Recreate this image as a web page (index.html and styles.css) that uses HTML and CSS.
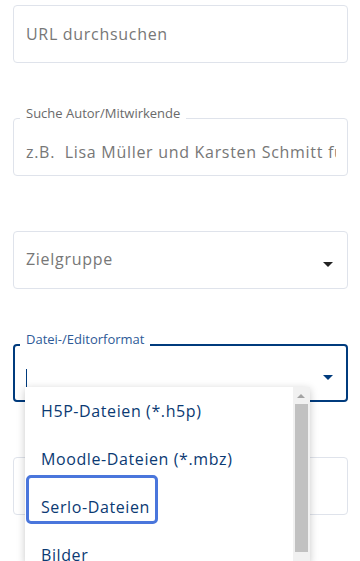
FILE: index.html
```html
<!DOCTYPE html>
<html lang="de">

<head>
    <meta charset="UTF-8">
    <meta name="viewport" content="width=device-width, initial-scale=1.0">
    <title>Suche</title>
    <link rel="stylesheet" href="styles.css">
</head>

<body>

    <form class="search-form">
        <div class="field">
            <input class="field-input" type="text" placeholder="URL durchsuchen">
        </div>

        <div class="field field--labelled">
            <label class="field-label">Suche Autor/Mitwirkende</label>
            <input class="field-input" type="text" placeholder="z.B.&nbsp; Lisa Müller und Karsten Schmitt für">
        </div>

        <div class="field field--select">
            <span class="select-value">Zielgruppe</span>
            <span class="select-arrow"></span>
        </div>

        <div class="field field--select field--labelled field--focused">
            <label class="field-label">Datei-/Editorformat</label>
            <span class="caret"></span>
            <span class="select-arrow"></span>

            <div class="dropdown">
                <ul class="dropdown-list">
                    <li class="dropdown-item">H5P-Dateien (*.h5p)</li>
                    <li class="dropdown-item">Moodle-Dateien (*.mbz)</li>
                    <li class="dropdown-item dropdown-item--focus">Serlo-Dateien</li>
                    <li class="dropdown-item">Bilder</li>
                </ul>
                <div class="scrollbar">
                    <span class="scrollbar-up"></span>
                    <span class="scrollbar-thumb"></span>
                </div>
            </div>
        </div>

        <div class="field"></div>
    </form>

</body>

</html>
```

FILE: styles.css
```css
html,
body {
    margin: 0;
    height: 100%;
    overflow: hidden;
    background: #fff;
}

body {
    font-family: "Open Sans", "Noto Sans", sans-serif;
}

.search-form {
    display: flex;
    flex-direction: column;
    gap: 55px;
    padding: 5px 12px 0 13px;
}

.field {
    position: relative;
    display: flex;
    align-items: center;
    height: 58px;
    box-sizing: border-box;
    padding: 0 11px 0 12px;
    border: 1px solid #dfe3eb;
    border-radius: 4px;
}

.field--labelled {
    padding-top: 9px;
}

.field--focused {
    border: 2px solid #003b7d;
    padding-left: 11px;
}

.field-label {
    position: absolute;
    top: -14px;
    left: 6px;
    padding: 0 6px;
    background: #fff;
    font-size: 13px;
    line-height: 16px;
    color: #6a6a6a;
    white-space: nowrap;
}

.field--focused .field-label {
    top: -15px;
    left: 5px;
    color: #2d5a97;
}

.field-input {
    flex: 1;
    min-width: 0;
    padding: 0;
    border: none;
    outline: none;
    background: transparent;
    font-family: inherit;
    font-size: 16px;
    letter-spacing: 0.7px;
    color: #333;
}

.field-input::placeholder {
    color: #777;
    opacity: 1;
}

.select-value {
    flex: 1;
    font-size: 16px;
    letter-spacing: 0.7px;
    color: #777;
    padding-bottom: 2px;
}

.select-arrow {
    position: absolute;
    right: 14px;
    top: 30px;
    width: 0;
    height: 0;
    border-left: 5px solid transparent;
    border-right: 5px solid transparent;
    border-top: 5px solid #222;
}

.field--focused .select-arrow {
    right: 13px;
    top: 29px;
    border-top-color: #003b7d;
}

.caret {
    width: 1px;
    height: 19px;
    margin-top: 2px;
    background: #003b7d;
}

/* open dropdown of the format select */
.dropdown {
    position: absolute;
    top: 41px;
    left: 10px;
    width: 285px;
    height: 176px;
    display: flex;
    background: #fff;
    box-shadow: 0 2px 8px rgba(0, 0, 0, 0.22);
    overflow: hidden;
    z-index: 2;
}

.dropdown-list {
    flex: 1;
    margin: 0;
    padding: 0;
    list-style: none;
}

.dropdown-item {
    position: relative;
    height: 48px;
    display: flex;
    align-items: center;
    padding-left: 16px;
    font-size: 16px;
    letter-spacing: 0.6px;
    color: #0b3a73;
}

.dropdown-item--focus::before {
    content: "";
    position: absolute;
    top: -8px;
    left: 1px;
    width: 126px;
    height: 43px;
    border: 3px solid #4a76dc;
    border-radius: 5px;
}

.scrollbar {
    position: relative;
    width: 17px;
    background: #f1f1f1;
}

.scrollbar-up {
    position: absolute;
    top: 7px;
    left: 4px;
    width: 0;
    height: 0;
    border-left: 4px solid transparent;
    border-right: 4px solid transparent;
    border-bottom: 4px solid #a3a3a3;
}

.scrollbar-thumb {
    position: absolute;
    top: 17px;
    left: 2px;
    width: 13px;
    height: 148px;
    background: #c1c1c1;
}
```
